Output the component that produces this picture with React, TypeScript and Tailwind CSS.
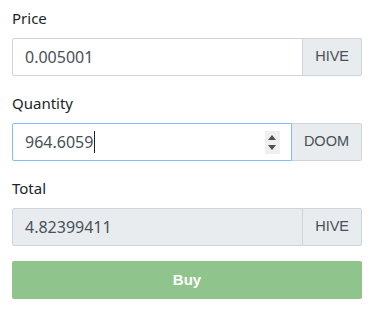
const font = { fontFamily: '"Noto Sans", sans-serif' };

function Spinner() {
  return (
    <div className="flex h-[23px] w-[15px] flex-col items-center justify-center gap-[5px] bg-[#efefef]">
      <svg width="8" height="5" viewBox="0 0 8 5">
        <path d="M4 0L8 5H0z" fill="#505050" />
      </svg>
      <svg width="8" height="5" viewBox="0 0 8 5">
        <path d="M0 0H8L4 5z" fill="#505050" />
      </svg>
    </div>
  );
}

function Field({
  label,
  value,
  unit,
  focused,
  disabled,
}: {
  label: string;
  value: string;
  unit: string;
  focused?: boolean;
  disabled?: boolean;
}) {
  return (
    <div className="mb-[15px]">
      <label className="mb-2 block text-[15px] leading-6 text-[#212529]" style={font}>
        {label}
      </label>
      <div className="flex h-[38px]">
        <div
          className={`flex min-w-0 flex-1 items-center rounded-l-[2px] border pl-3 pr-[11px] text-base text-[#495057] ${
            focused ? 'border-[#80bdff] bg-white' : disabled ? 'border-[#ced4da] bg-[#e9ecef]' : 'border-[#ced4da] bg-white'
          }`}
          style={font}
        >
          <span>{value}</span>
          {focused && <span className="ml-px h-[22px] w-px bg-[#222]" />}
          {focused && (
            <div className="ml-auto">
              <Spinner />
            </div>
          )}
        </div>
        <div
          className={`flex items-center rounded-r-[2px] border border-[#ced4da] bg-[#e9ecef] px-3 text-[14.5px] text-[#495057] ${
            focused ? 'border-l-0' : '-ml-px'
          }`}
          style={{ fontFamily: '"Liberation Sans", Arial, sans-serif' }}
        >
          {unit}
        </div>
      </div>
    </div>
  );
}

export default function App() {
  return (
    <div className="w-[374px] bg-white px-3 pt-[6px]">
      <Field label="Price" value="0.005001" unit="HIVE" />
      <Field label="Quantity" value="964.6059" unit="DOOM" focused />
      <Field label="Total" value="4.82399411" unit="HIVE" disabled />
      <button
        className="mt-[3px] flex h-[38px] w-full items-center justify-center rounded-[2px] bg-[#8fc58c] text-[15px] font-bold text-white"
        style={{ fontFamily: '"Liberation Sans", Arial, sans-serif' }}
      >
        Buy
      </button>
    </div>
  );
}
